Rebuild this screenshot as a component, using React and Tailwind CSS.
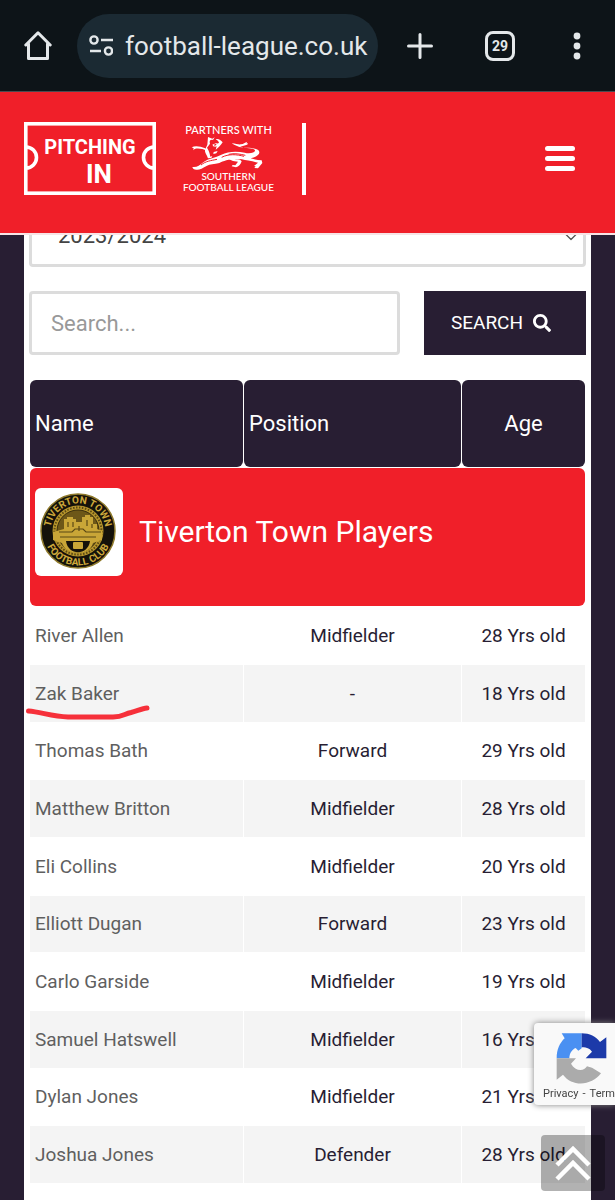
import React, { useState } from 'react';
import { FaSearch } from 'react-icons/fa';
import { ChevronDown } from 'lucide-react';

const players = [
    { name: 'River Allen', position: 'Midfielder', age: 28 },
    { name: 'Zak Baker', position: '-', age: 18, marked: true },
    { name: 'Thomas Bath', position: 'Forward', age: 29 },
    { name: 'Matthew Britton', position: 'Midfielder', age: 28 },
    { name: 'Eli Collins', position: 'Midfielder', age: 20 },
    { name: 'Elliott Dugan', position: 'Forward', age: 23 },
    { name: 'Carlo Garside', position: 'Midfielder', age: 19 },
    { name: 'Samuel Hatswell', position: 'Midfielder', age: 16 },
    { name: 'Dylan Jones', position: 'Midfielder', age: 21 },
    { name: 'Joshua Jones', position: 'Defender', age: 28 },
];

const BrowserBar = () => (
    <div className="flex items-center h-[92px] pl-6 pr-8 bg-[#0d1418] border-b border-[#4b4a50] text-[#e4e8ea]">
        <button aria-label="Home" className="shrink-0">
            <svg className="w-7 h-8" viewBox="0 0 28 32" fill="none" stroke="currentColor" strokeWidth="3" strokeLinejoin="round" strokeLinecap="round">
                <path d="M1.8 15 14 2.8 26.2 15M4.5 13.5V28.500h19V13.5" />
            </svg>
        </button>
        <div className="flex items-center grow h-16 ml-[25px] pl-3 rounded-full bg-[#1b2a33] min-w-0">
            <svg className="w-6 h-6 shrink-0 mr-3" viewBox="0 0 24 24" fill="none" stroke="currentColor" strokeWidth="2.4">
                <circle cx="5" cy="6" r="3.6" />
                <path d="M12 6h12M1 17h11" />
                <circle cx="19.5" cy="17" r="3.6" />
            </svg>
            <span className="text-[26px] leading-8 whitespace-nowrap">football-league.co.uk</span>
        </div>
        <div className="flex items-center shrink-0 ml-7">
            <button aria-label="New tab">
                <svg className="w-7 h-7" viewBox="0 0 28 28" stroke="currentColor" strokeWidth="3" strokeLinecap="round">
                    <path d="M14 2.5v23M2.5 14h23" />
                </svg>
            </button>
            <button aria-label="Tabs" className="flex items-center justify-center w-[30px] h-[30px] ml-[51px] rounded-lg border-3 border-current text-sm font-bold leading-none">29</button>
            <button aria-label="Menu" className="ml-14">
                <svg className="w-3 h-7" viewBox="0 0 12 28" fill="currentColor">
                    <circle cx="6" cy="4" r="3.4" />
                    <circle cx="6" cy="14" r="3.4" />
                    <circle cx="6" cy="24" r="3.4" />
                </svg>
            </button>
        </div>
    </div>
);

const PitchingInLogo = () => (
    <svg className="w-[132px] h-[73px]" viewBox="0 0 132 73" fill="none" stroke="#fff" strokeWidth="3.6">
        <rect x="1.8" y="1.8" width="128.4" height="69.4" />
        <path d="M2 25a10.500 10.500 0 0 1 0 21M130 25a10.500 10.500 0 0 0 0 21" />
        <g fill="#fff" stroke="none" fontFamily="Roboto, sans-serif" fontWeight="700" textAnchor="middle">
            <text x="66" y="32" fontSize="20">PITCHING</text>
            <text x="75" y="61" fontSize="26">IN</text>
        </g>
    </svg>
);

const PartnersLogo = () => (
    <div className="flex flex-col items-center text-white leading-[11px] font-[Lato,sans-serif] font-medium whitespace-nowrap">
        <span className="text-[11px]">PARTNERS WITH</span>
        <svg className="w-[74px] h-9" viewBox="68 82 222 108" fill="#fff">
            <path d="M70 119c10-6 24-4 41 3l4 7c-12-5-24-8-36-5l-4 4 1-6z" />
            <path d="M119 88l13 5 7-4-5 8c-9-2-12 4-9 11l-9 12c7 10 8 18 10 27l6-2-3 6-10 1c-3-11-10-16-9-26l7-15z" />
            <path d="M142 95c7-3 15 1 21 9-6 8-10 15-21 22l3-10-9 3 9-9-8-3c8-1 12 2 15-2-1-4-5-7-10-10zM133 109l8 2-7 6zM136 133l12-3-4 7-9 2z" />
            <path d="M73 178c14 1 20-4 32-14 16-13 36-13 54-23 19-10 47-11 70-6 15 4 30 0 31-6 1-7-20-6-37-10-10-3-24-4-33-12 14 1 19 4 28 3 8-1 11-6 19-8l-3 5c8-1 5 4-3 6-11 4-17 4-25 4 18 4 48 1 62 9 12 8 2 22-21 26 13 4 22 6 33 6l2 8-13 16-11-1 4-5-5-1 12-10-17-4c-18-3-27-6-42-7-27-1-45 6-57 12-15 3-29 4-37 8-12 7-22 12-29 12-9 1-14-3-15-8z" />
            <path d="M158 142c15 0 31 7 44 13 8 0 15 1 18 6-3 11-9 15-17 18l-13-3 3-4 8 1 8-11-15-2c-12-5-21-10-36-12z" />
            <g fill="none" stroke="#f01f29" strokeWidth="3">
                <path d="M98 172c14-12 30-13 48-17M160 149c21-11 45-9 67-3M181 140c17-4 34-1 50 3" />
            </g>
        </svg>
        <span className="text-[10px]">SOUTHERN</span>
        <span className="text-[10px]">FOOTBALL LEAGUE</span>
    </div>
);

const SiteHeader = () => (
    <header className="relative z-10 flex items-center h-[143px] pl-6 pr-10 pb-2 bg-[#f01f29] border-b-2 border-[#f7e4e6]">
        <a href="#home" className="flex items-center" aria-label="Pitching In Southern Football League">
            <PitchingInLogo />
            <div className="ml-[27px]"><PartnersLogo /></div>
            <div className="w-1 h-[72px] ml-7 bg-white" />
        </a>
        <button aria-label="Open menu" className="flex flex-col gap-[5px] ml-auto">
            <span className="w-[30px] h-[5px] rounded-sm bg-white" />
            <span className="w-[30px] h-[5px] rounded-sm bg-white" />
            <span className="w-[30px] h-[5px] rounded-sm bg-white" />
        </button>
    </header>
);

const ClubCrest = () => (
    <svg className="w-[88px] h-[88px] shrink-0 rounded-md bg-white" viewBox="0 0 88 88" role="img" aria-label="Tiverton Town FC crest">
        <defs>
            <path id="crest-top" d="M15.500 43a27.500 27.500 0 0 1 55 0" />
            <path id="crest-bottom" d="M8.500 43a34.500 34.500 0 0 0 69 0" />
        </defs>
        <circle cx="43" cy="43" r="37" fill="#15120a" stroke="#8f7a2c" strokeWidth="1.500" />
        <circle cx="43" cy="43" r="25.500" fill="#b8962c" />
        <circle cx="43" cy="43" r="21" fill="#6d5718" stroke="#3a2e0c" strokeWidth="1" />
        <circle cx="43" cy="43" r="23.500" fill="none" stroke="#5b4914" strokeWidth="2" strokeDasharray="1.500 1.500" />
        <g fill="#cda83a" fontFamily="Roboto, sans-serif" fontWeight="700" fontSize="10" textAnchor="middle">
            <text><textPath href="#crest-top" startOffset="50%">TIVERTON TOWN</textPath></text>
            <text><textPath href="#crest-bottom" startOffset="50%">FOOTBALL CLUB</textPath></text>
        </g>
        <path fill="#c9a637" d="M29 41V31h3v-2h6v2h3v3h6v-5h3v-2h5v2h3v7h4v5l5 2v9l-9 3c-3 13-27 13-31 0l-9-3v-8z" />
        <path fill="none" stroke="#5b4914" strokeWidth="1.200" d="M24 44h13l3-3h8l3 3h15M25 49h36M33 34v5M38 34v5M44 38v5M52 32v6M57 36v4" />
        <path fill="#15120a" d="M31 53h24c-2 15-22 15-24 0z" />
        <rect x="38" y="54" width="10" height="7" rx="1" fill="#c9a637" />
    </svg>
);

const Recaptcha = () => (
    <div className="fixed right-0 top-[1023px] z-20 w-[81px] h-[82px] pt-[9px] overflow-hidden rounded-l-sm bg-[#f9f9f9] shadow-[0_0_6px_#808080]">
        <svg className="w-[52px] h-[52px] ml-[22px]" viewBox="122 64 156 156">
            <path fill="#4a90f2" d="M199 68h-60l9 15c-15 14-24 34-24 60h38c0-16 9-27 19-31l8 8 10-7z" />
            <path fill="#1c3aa9" d="M199 68c24 0 43 9 55 26l19-14v63h-62l19-20c-6-8-13-13-31-13z" />
            <path fill="#ababab" d="M124 143h58l-15 16c12 22 38 25 48 8l15 4 27 17c-26 36-85 43-114 4l-19 15z" />
        </svg>
        <div className="flex gap-1 ml-[9px] text-[11px] leading-5 text-[#444] whitespace-nowrap">
            <a href="#privacy">Privacy</a>
            <span>-</span>
            <a href="#terms">Terms</a>
        </div>
    </div>
);

const ScrollTop = () => (
    <button aria-label="Back to top" className="fixed right-[10px] top-[1135px] z-10 flex items-center justify-center w-16 h-14 rounded-sm bg-black/30">
        <svg className="w-9 h-9" viewBox="0 0 36 36" fill="none" stroke="#fff" strokeWidth="4.500">
            <path d="M2 20 18 4l16 16M2 34l16-16 16 16" />
        </svg>
    </button>
);

const PlayerRow = ({ player }) => (
    <tr className="h-[57px] nth-[3n]:h-14 even:bg-[#f4f4f4]">
        <td className="relative pl-[5px] text-left text-[#5f5f5f]">
            <a href="#player">{player.name}</a>
            {player.marked && (
                <svg className="absolute -left-[5px] top-10 w-[126px] h-[15px]" viewBox="0 0 126 15" fill="none" stroke="#f6303a" strokeWidth="5" strokeLinecap="round" strokeLinejoin="round">
                    <path d="M3.500 6C16 7 27 11.500 43 12H88c10 0 11-3 18-4.500 6-1.500 11-4 16-4.500" />
                </svg>
            )}
        </td>
        <td>{player.position}</td>
        <td>{player.age} Yrs old</td>
    </tr>
);

const App = () => {
    const [season, setSeason] = useState('2023/2024');
    const [search, setSearch] = useState('');

    return (
        <div className="flex flex-col min-h-screen bg-[#281e33] font-[Roboto,sans-serif]">
            <BrowserBar />
            <SiteHeader />
            <main className="grow flex flex-col gap-6 -mt-8 mx-6 px-[5px] bg-white">
                <div className="relative">
                    <select
                        aria-label="Season"
                        value={season}
                        onChange={e => setSeason(e.target.value)}
                        className="block appearance-none w-full h-16 px-[26px] rounded border-3 border-[#dcdcdc] bg-white text-[22px] text-[#444]"
                    >
                        <option>2023/2024</option>
                        <option>2022/2023</option>
                    </select>
                    <ChevronDown size={20} strokeWidth={1.5} className="absolute right-[5px] top-6 text-[#555] pointer-events-none" />
                </div>
                <form className="flex gap-6" onSubmit={e => e.preventDefault()}>
                    <input
                        type="text"
                        aria-label="Search players"
                        placeholder="Search..."
                        value={search}
                        onChange={e => setSearch(e.target.value)}
                        className="grow min-w-0 h-16 px-[19px] rounded border-3 border-[#dcdcdc] text-[22px] text-[#444] placeholder:text-[#999]"
                    />
                    <button type="submit" className="flex items-center justify-center gap-[10px] w-[162px] h-16 pr-2 shrink-0 bg-[#281e33] text-white text-[19px]">
                        SEARCH
                        <FaSearch size={18} />
                    </button>
                </form>
                <table className="w-full table-fixed border-separate border-spacing-px text-[19px] leading-6 text-center text-[#281e33]">
                    <colgroup>
                        <col />
                        <col className="w-[217px]" />
                        <col className="w-[123px]" />
                    </colgroup>
                    <thead>
                        <tr className="h-[87px] text-[22px] text-white">
                            <th className="pl-[5px] rounded-md bg-[#281e33] font-normal text-left">Name</th>
                            <th className="pl-[5px] rounded-md bg-[#281e33] font-normal text-left">Position</th>
                            <th className="rounded-md bg-[#281e33] font-normal">Age</th>
                        </tr>
                        <tr>
                            <th colSpan={3} className="pt-5 pb-[30px] pl-[5px] rounded-md bg-[#f01f29] font-normal">
                                <div className="flex items-center gap-4">
                                    <ClubCrest />
                                    <h2 className="text-[30px] leading-10 text-white">Tiverton Town Players</h2>
                                </div>
                            </th>
                        </tr>
                    </thead>
                    <tbody>
                        {players.map(player => <PlayerRow key={player.name} player={player} />)}
                    </tbody>
                </table>
            </main>
            <Recaptcha />
            <ScrollTop />
        </div>
    );
};

export default App;
